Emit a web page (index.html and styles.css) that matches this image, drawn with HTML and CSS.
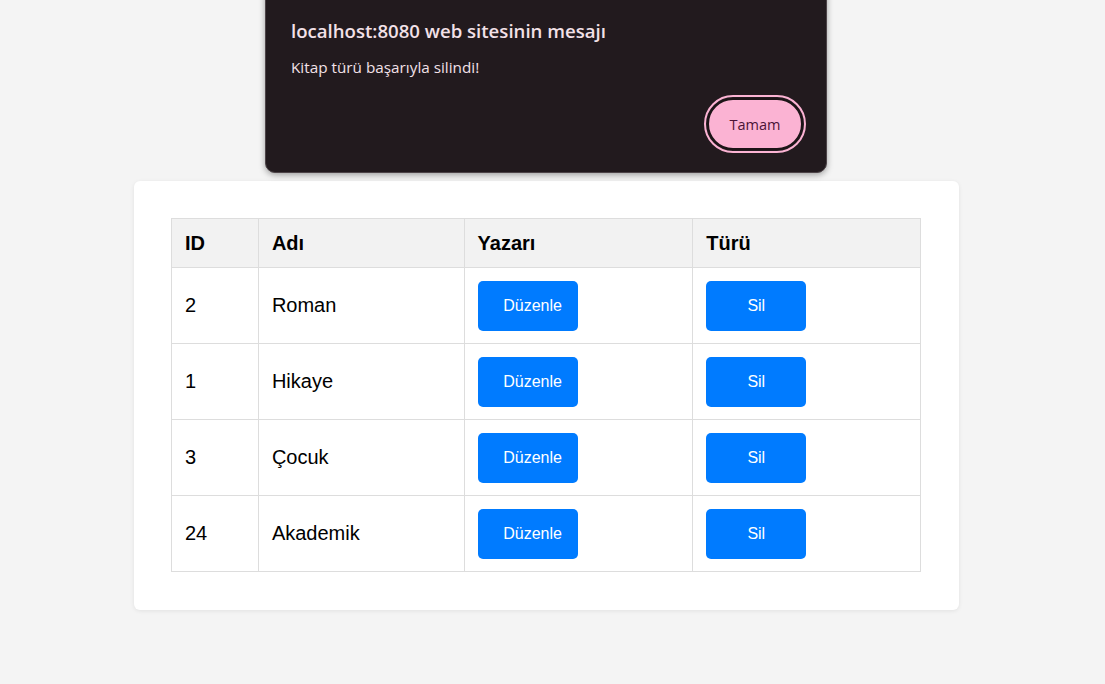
FILE: index.html
```html
<!DOCTYPE html>
<html lang="tr">
<head>
<meta charset="utf-8">
<title>Kitap Türleri</title>
<link rel="stylesheet" href="styles.css">
</head>
<body>
<main class="card">
  <table class="grid">
    <thead>
      <tr><th class="c-id">ID</th><th class="c-name">Adı</th><th class="c-author">Yazarı</th><th class="c-type">Türü</th></tr>
    </thead>
    <tbody>
      <tr><td>2</td><td>Roman</td><td><button class="btn btn-edit">Düzenle</button></td><td><button class="btn">Sil</button></td></tr>
      <tr><td>1</td><td>Hikaye</td><td><button class="btn btn-edit">Düzenle</button></td><td><button class="btn">Sil</button></td></tr>
      <tr><td>3</td><td>Çocuk</td><td><button class="btn btn-edit">Düzenle</button></td><td><button class="btn">Sil</button></td></tr>
      <tr><td>24</td><td>Akademik</td><td><button class="btn btn-edit">Düzenle</button></td><td><button class="btn">Sil</button></td></tr>
    </tbody>
  </table>
</main>
<div class="dialog">
  <div class="dialog-title">localhost:8080 web sitesinin mesajı</div>
  <div class="dialog-msg">Kitap türü başarıyla silindi!</div>
  <div class="dialog-actions"><button class="dialog-btn">Tamam</button></div>
</div>
</body>
</html>
```
FILE: styles.css
```css
* { box-sizing: border-box; }
html, body { margin: 0; padding: 0; }
body {
  background: #f4f4f4;
  font-family: "Liberation Sans", Arial, sans-serif;
  padding-top: 181px;
  height: 684px;
  overflow: hidden;
}
.card {
  width: 825px;
  margin-left: 134px;
  background: #fff;
  border-radius: 6px;
  box-shadow: 0 1px 4px rgba(0,0,0,0.08);
  padding: 37px 38px 38px 37px;
}
.grid {
  width: 750px;
  border-collapse: collapse;
  font-size: 20px;
  color: #000;
}
.grid th, .grid td {
  border: 1px solid #dddddd;
  padding: 0 12px 0 13px;
  text-align: left;
}
.grid th {
  background: #f2f2f2;
  font-weight: bold;
  height: 49px;
  font-size: 20px;
}
.grid td { height: 76px; }
.c-id { width: 87px; }
.c-name { width: 206px; }
.c-author { width: 229px; }
.c-type { width: 228px; }
.btn {
  display: block;
  width: 100px;
  height: 50px;
  border: 0;
  border-radius: 5px;
  background: #007bff;
  color: #fff;
  font-family: "Liberation Sans", Arial, sans-serif;
  font-size: 16px;
  padding: 0;
  text-align: center;
  margin-top: 1px;
}
.btn-edit { padding-left: 10px; }
.dialog {
  position: absolute;
  left: 265px;
  top: -20px;
  width: 562px;
  height: 193px;
  background: #221a1e;
  border: 1px solid #4d4448;
  border-radius: 10px;
  box-shadow: 0 2px 6px rgba(0,0,0,0.35);
  padding: 37px 23px 0 25px;
  font-family: "Open Sans", "Noto Sans", sans-serif;
  color: #f3e1e8;
}
.dialog-title {
  font-size: 18.6px;
  font-weight: 600;
  line-height: 26px;
}
.dialog-msg {
  font-size: 15.3px;
  line-height: 20px;
  margin-top: 13px;
}
.dialog-actions {
  display: flex;
  justify-content: flex-end;
  margin-top: 21px;
}
.dialog-btn {
  width: 96px;
  height: 52px;
  border-radius: 26px;
  background: #fbb3d3;
  color: #4b1336;
  border: 2px solid #1c1417;
  outline: 2px solid #fbb3d3;
  outline-offset: 1px;
  font-family: "Open Sans", "Noto Sans", sans-serif;
  font-size: 14.5px;
  padding: 0;
}
```
